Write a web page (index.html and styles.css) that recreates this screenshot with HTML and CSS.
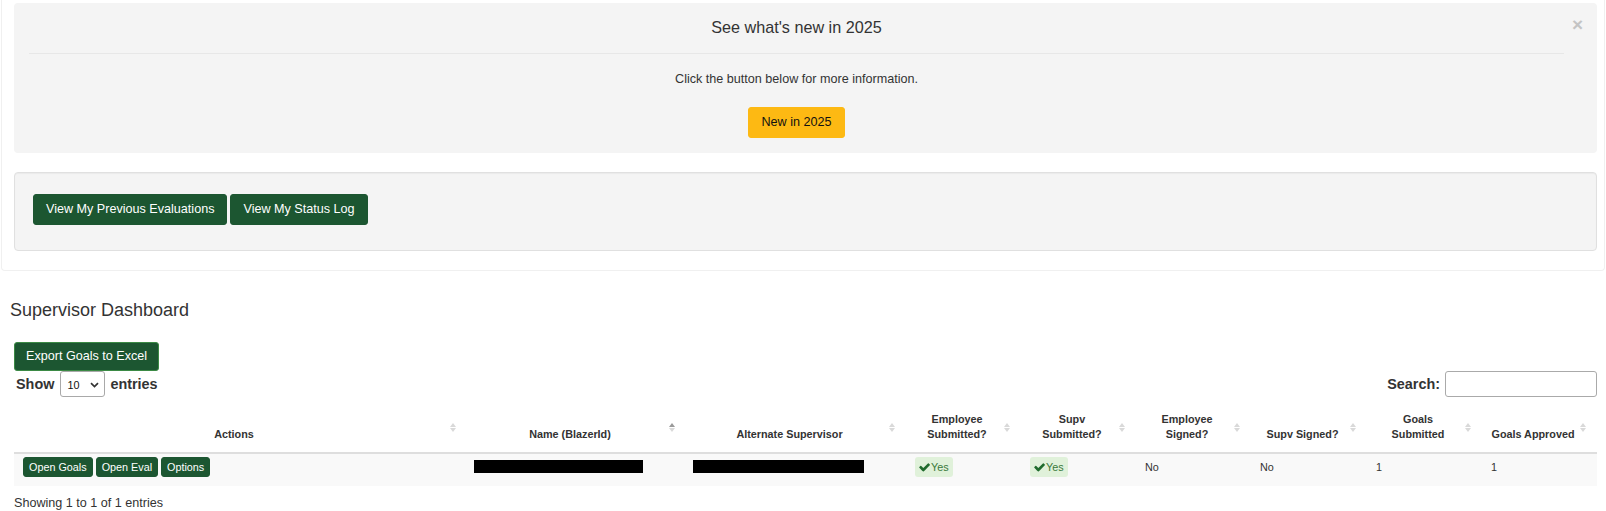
FILE: index.html
```html
<!DOCTYPE html>
<html lang="en">
<head>
<meta charset="utf-8">
<title>Supervisor Dashboard</title>
<link rel="stylesheet" href="styles.css">
</head>
<body>
<div class="top-wrap">
  <div class="alert">
    <span class="alert-close">&times;</span>
    <div class="alert-head"><h4>See what's new in 2025</h4></div>
    <div class="alert-body">
      <p>Click the button below for more information.</p>
      <a class="btn btn-gold">New in 2025</a>
    </div>
  </div>
  <div class="well">
    <a class="btn btn-green">View My Previous Evaluations</a>
    <a class="btn btn-green">View My Status Log</a>
  </div>
</div>

<section class="dash">
  <h2>Supervisor Dashboard</h2>
  <a class="btn btn-green btn-export">Export Goals to Excel</a>
  <div class="controls">
    <div class="length">Show
      <span class="select"><span>10</span>
        <svg class="chev" width="9" height="6" viewBox="0 0 9 6"><path d="M1 1.2 L4.5 4.6 L8 1.2" fill="none" stroke="#333" stroke-width="1.7"/></svg>
      </span>
      entries</div>
    <div class="search">Search: <input type="text" class="search-input"></div>
  </div>

  <table class="grid">
    <colgroup>
      <col class="c-actions"><col class="c-name"><col class="c-alt">
      <col class="c-sm"><col class="c-sm"><col class="c-sm"><col class="c-sm2"><col class="c-sm"><col class="c-sm">
    </colgroup>
    <thead>
      <tr>
        <th class="sortable">Actions</th>
        <th class="sortable sorted-asc">Name (BlazerId)</th>
        <th class="sortable">Alternate Supervisor</th>
        <th class="sortable">Employee<br>Submitted?</th>
        <th class="sortable">Supv<br>Submitted?</th>
        <th class="sortable">Employee<br>Signed?</th>
        <th class="sortable">Supv Signed?</th>
        <th class="sortable">Goals<br>Submitted</th>
        <th class="sortable">Goals Approved</th>
      </tr>
    </thead>
    <tbody>
      <tr>
        <td><div class="actions">
          <a class="btn btn-green btn-xs">Open Goals</a>
          <a class="btn btn-green btn-xs">Open Eval</a>
          <a class="btn btn-green btn-xs">Options</a>
        </div></td>
        <td class="redacted-cell"><span class="redact redact-name"></span></td>
        <td class="redacted-cell"><span class="redact redact-alt"></span></td>
        <td><span class="badge-yes"><svg class="check" width="11" height="9" viewBox="95 355 1580 1175"><path d="M1671 566q0 40-28 68l-724 724-136 136q-28 28-68 28t-68-28l-136-136-362-362q-28-28-28-68t28-68l136-136q28-28 68-28t68 28l294 295 656-657q28-28 68-28t68 28l136 136q28 28 28 68z" fill="#1f6b2c"/></svg>Yes</span></td>
        <td><span class="badge-yes"><svg class="check" width="11" height="9" viewBox="95 355 1580 1175"><path d="M1671 566q0 40-28 68l-724 724-136 136q-28 28-68 28t-68-28l-136-136-362-362q-28-28-28-68t28-68l136-136q28-28 68-28t68 28l294 295 656-657q28-28 68-28t68 28l136 136q28 28 28 68z" fill="#1f6b2c"/></svg>Yes</span></td>
        <td>No</td>
        <td>No</td>
        <td>1</td>
        <td>1</td>
      </tr>
    </tbody>
  </table>
  <div class="info">Showing 1 to 1 of 1 entries</div>
</section>
</body>
</html>
```

FILE: styles.css
```css
* {
  box-sizing: border-box;
}

body {
  margin: 0;
  font-family: "Liberation Sans", Arial, sans-serif;
  font-size: 12.6px;
  color: #333;
  background: #fff;
}

/* ---------- top area ---------- */
.top-wrap {
  margin: 0 1px;
  border: 1px solid #f0f0f0;
  border-top: 0;
  border-radius: 0 0 4px 4px;
  padding: 3px 7px 19px 12px;
}

.alert {
  position: relative;
  background: #f4f4f4;
  border-radius: 4px;
  padding: 14px 33px 15px 15px;
  text-align: center;
}

.alert-close {
  position: absolute;
  top: 12px;
  right: 14px;
  font-size: 19px;
  font-weight: bold;
  line-height: 20px;
  color: #c4c4c4;
}

.alert-head {
  padding-bottom: 16px;
  border-bottom: 1px solid #e7e7e7;
}

.alert-head h4 {
  margin: 0;
  font-size: 16.2px;
  font-weight: normal;
  line-height: 20px;
  color: #333;
}

.alert-body p {
  margin: 16px 0 19px;
  line-height: 18px;
}

.btn {
  display: inline-block;
  border: 1px solid transparent;
  border-radius: 3px;
  padding: 5px 12px;
  font-size: 12.6px;
  line-height: 19px;
  text-decoration: none;
  white-space: nowrap;
  cursor: pointer;
}

.btn-gold {
  background: #fdb913;
  border-color: #fdb913;
  color: #111;
}

.btn-green {
  background: #1c5631;
  border-color: #1c5631;
  color: #fff;
}

.well {
  display: flex;
  gap: 3px;
  margin-top: 19px;
  background: #f4f4f4;
  border: 1px solid #e0e0e0;
  border-radius: 4px;
  box-shadow: inset 0 1px 1px rgba(0, 0, 0, 0.04);
  padding: 21px 17px 25px 18px;
}

/* ---------- dashboard ---------- */
.dash {
  padding: 0 9px 0 14px;
}

.dash h2 {
  margin: 29px 0 0 -4px;
  font-size: 18px;
  font-weight: normal;
  line-height: 20px;
  color: #333;
}

.btn-export {
  margin-top: 22px;
  padding: 4px 11px 5px;
  line-height: 18px;
  border-color: #3b8a45;
}

.controls {
  display: flex;
  justify-content: space-between;
  align-items: center;
  height: 26px;
  font-size: 14.4px;
  font-weight: bold;
  color: #333;
}

.length {
  display: flex;
  align-items: center;
  margin-left: 2px;
}

.select {
  display: inline-flex;
  align-items: center;
  justify-content: space-between;
  width: 45px;
  height: 26px;
  margin: 0 5px 0 6px;
  padding: 1px 5px 0 6px;
  border: 1px solid #a9a9a9;
  border-radius: 3px;
  background: #fff;
  font-size: 10.8px;
  font-weight: normal;
  color: #111;
}

.search {
  display: flex;
  align-items: center;
}

.search-input {
  width: 152px;
  height: 26px;
  margin: 0 0 0 5px;
  border: 1px solid #aaa;
  border-radius: 3px;
  background: #fff;
  font: inherit;
}

/* ---------- table ---------- */
.grid {
  width: 100%;
  margin-top: 7px;
  table-layout: fixed;
  border-collapse: separate;
  border-spacing: 0;
}

.c-actions { width: 453px; }
.c-name { width: 219px; }
.c-alt { width: 220px; }
.c-sm { width: 115px; }
.c-sm2 { width: 116px; }

.grid th {
  position: relative;
  padding: 8px 22px 11px 9px;
  font-size: 10.8px;
  font-weight: bold;
  line-height: 14.5px;
  text-align: center;
  vertical-align: bottom;
  white-space: nowrap;
  border-bottom: 2px solid #dedede;
  color: #333;
}

.sortable::before,
.sortable::after {
  content: "";
  position: absolute;
  right: 11px;
  width: 0;
  height: 0;
  border-left: 3px solid transparent;
  border-right: 3px solid transparent;
}

.sortable::before {
  top: 19px;
  border-bottom: 4px solid #d9d9d9;
}

.sortable::after {
  top: 24px;
  border-top: 4px solid #d9d9d9;
}

.sorted-asc::before {
  border-bottom-color: #9a9a9a;
}

.grid td {
  padding: 3px 9px 8px;
  font-size: 10.8px;
  line-height: 20px;
  vertical-align: middle;
  background: #f9f9f9;
  color: #333;
}

.actions {
  display: flex;
  gap: 3px;
}

.btn-xs {
  padding: 1px 5px;
  font-size: 10.8px;
  line-height: 16px;
  border-radius: 3px;
}

.redact {
  display: block;
  height: 13px;
  margin: 3px 0 4px -2px;
  background: #000;
}

.redact-name { width: 169px; }
.redact-alt { width: 171px; }

.badge-yes {
  display: inline-flex;
  align-items: center;
  gap: 1px;
  height: 20px;
  padding: 0 4px;
  border-radius: 3px;
  background: #e0f1da;
  color: #3a7a3b;
}

.check {
  display: block;
}

.info {
  margin-top: 8px;
  line-height: 18px;
  font-size: 12.6px;
  color: #333;
}
```
